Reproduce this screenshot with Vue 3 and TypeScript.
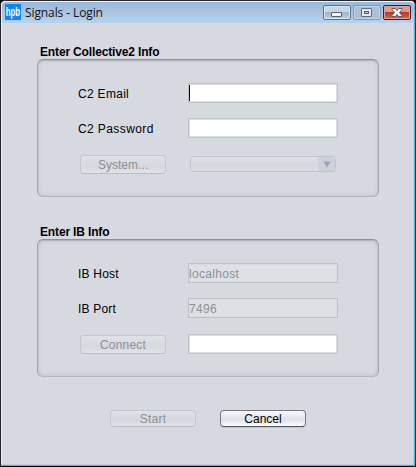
<script setup lang="ts">
import { ref } from 'vue'

const email = ref('')
const password = ref('')
const host = ref('localhost')
const port = ref('7496')
const account = ref('')
</script>

<template>
  <main class="window">
    <header class="titlebar">
      <div class="logo"><span>hpb</span></div>
      <h1>Signals - Login</h1>
      <nav class="controls">
        <button class="ctl" aria-label="Minimize">
          <svg width="26" height="13" viewBox="0 0 26 13"><rect x="7.5" y="6.5" width="10" height="4" rx=".5" fill="#f5f5f5" stroke="#565f70" /></svg>
        </button>
        <button class="ctl dim" aria-label="Maximize">
          <svg width="26" height="13" viewBox="0 0 26 13">
            <rect x="7.5" y="2.5" width="10" height="8" rx=".5" fill="#e4e8ec" stroke="#626d7d" />
            <rect x="10.5" y="5.5" width="4" height="2" fill="#9fb9d8" stroke="#59677b" />
          </svg>
        </button>
        <button class="ctl close" aria-label="Close">
          <svg width="26" height="13" viewBox="0 0 26 13">
            <path d="M8 2.500h3.500l1.500 2 1.500-2H18v1L15.500 6.500 18 9.500v1h-3.500l-1.500-2-1.500 2H8v-1l2.500-3L8 3.500z" fill="#f7f7f7" stroke="#59566a" />
          </svg>
        </button>
      </nav>
    </header>

    <form class="content" @submit.prevent>
      <section class="group">
        <h2>Enter Collective2 Info</h2>
        <div class="panel">
          <label class="l-email" for="email">C2 Email</label>
          <div class="field focused"><input id="email" v-model="email" /></div>
          <label class="l-password" for="password">C2 Password</label>
          <div class="field"><input id="password" v-model="password" type="password" /></div>
          <button class="btn" disabled><span>System...</span></button>
          <div class="combo">
            <span class="arrow"><svg width="8" height="7" viewBox="0 0 8 7"><path d="M.5.500h7L4 6.500z" fill="#9da3ae" /></svg></span>
          </div>
        </div>
      </section>

      <section class="group">
        <h2>Enter IB Info</h2>
        <div class="panel">
          <label for="host">IB Host</label>
          <div class="field off"><input id="host" v-model="host" disabled /></div>
          <label for="port">IB Port</label>
          <div class="field off"><input id="port" v-model="port" disabled /></div>
          <button class="btn" disabled><span class="wide">Connect</span></button>
          <div class="field low"><input v-model="account" aria-label="Connection status" /></div>
        </div>
      </section>

      <footer class="actions">
        <button class="btn" disabled><span class="wide">Start</span></button>
        <button class="btn active"><span>Cancel</span></button>
      </footer>
    </form>
  </main>
</template>

<style>
body { background: #000; overflow: hidden; }
</style>

<style scoped>
* { box-sizing: border-box; }
.window {
  width: 416px;
  height: 467px;
  display: flex;
  flex-direction: column;
  border: 1px solid #000;
  border-top-color: #25272c;
  border-left-color: #25272c;
  border-radius: 5px 5px 0 0;
  box-shadow: inset -1px -1px #35c2ea, inset -2px -2px #bccde6, inset 1px 1px #e6eef6;
  background: #d6d9e0;
  font: 12px/15px "Liberation Sans", Arial, sans-serif;
  color: #000;
}
.titlebar {
  height: 22px;
  margin: 0 1px 0 0;
  padding: 3px 3px 0 3px;
  display: flex;
  border-radius: 5px 5px 0 0;
  border-top: 1px solid #eef5fb;
  border-left: 1px solid #e6eef6;
  background: linear-gradient(#9bb8d8, #b9d1ea);
}
.logo {
  width: 16px;
  height: 16px;
  margin-top: -1px;
  display: flex;
  flex: none;
  align-items: center;
  justify-content: center;
  background: #0788fa;
}
.logo span {
  font: bold 13px/14px "Liberation Sans", Arial, sans-serif;
  color: #fff;
  transform: scaleX(.6);
}
h1 {
  margin: -1px 0 0 4px;
  font: 12px/17px "Open Sans", "Noto Sans", sans-serif;
  letter-spacing: -0.1px;
  color: #111;
  white-space: nowrap;
}
.controls { display: flex; gap: 2px; margin-left: auto; }
.ctl {
  width: 28px;
  height: 15px;
  padding: 0;
  border: 1px solid #5c7089;
  border-radius: 2px;
  box-shadow: inset 0 0 0 1px #dce8f4;
  background: linear-gradient(#c4d7ea 48%, #9ab5d1 50%, #b7d0e8);
}
.ctl svg { display: block; }
.dim { border-color: #8198b3; box-shadow: inset 0 0 0 1px #c1d5e9; background: #a9c2dc; }
.close { border-color: #481925; box-shadow: inset 0 0 0 1px #e3a49b; background: linear-gradient(#dc9b8d 45%, #b83b29 50%, #cf6d4c); }
.content { padding: 22px 36px 0; }
.group { margin-bottom: 28px; }
h2 { margin: 0 0 0 3px; font: bold 12px/14px "Liberation Sans", Arial, sans-serif; letter-spacing: -0.15px; }
.panel {
  width: 342px;
  height: 138px;
  padding: 24px 40px 0;
  display: grid;
  grid-template-columns: 110px 150px;
  grid-template-rows: 35px 35px 22px;
  align-items: start;
  border: 1px solid #a1a4aa;
  border-top-color: #8c8f95;
  border-bottom-color: #b3b6bb;
  border-radius: 6px;
  box-shadow: inset 0 1px 1px #b0b4ba, inset 0 0 5px #b9bdc2;
  background: #d6d9e0;
}
label { padding-top: 1px; line-height: 20px; letter-spacing: .2px; white-space: nowrap; }
.l-password { letter-spacing: .4px; }
.l-email { letter-spacing: .3px; }
.panel > label, .panel > .field { margin-top: -1px; }
.field {
  width: 150px;
  height: 20px;
  border: 1px solid #c0c1c3;
  background: #fff;
  box-shadow: inset 0 0 0 1px #dfe0e2;
}
.field input {
  display: block;
  width: 100%;
  height: 18px;
  padding: 2px 0 0;
  border: 0;
  outline: 0;
  background: transparent;
  font: 12px/16px "Liberation Sans", Arial, sans-serif;
  letter-spacing: .3px;
}
.field.off { background: #dde1e5; box-shadow: inset 0 0 0 1px #d8dbdf; }
.off input { color: #8e8f94; -webkit-text-fill-color: #8e8f94; }
.focused { display: flex; align-items: center; }
.focused::before { content: ""; width: 1px; height: 16px; background: #000; }
.panel > .low { margin-top: 0; }
.btn {
  width: 86px;
  height: 19px;
  padding: 2px 0 0;
  display: flex;
  align-items: center;
  justify-content: center;
  border: 1px solid #c3c7ce;
  border-bottom-color: #b8bcc4;
  border-radius: 4px;
  background: linear-gradient(#dfe2e6, #d5d9df 60%, #dfe2e6);
  color: #8e8f94;
  font: 12px/15px "Liberation Sans", Arial, sans-serif;
}
.wide { letter-spacing: .2px; }
.panel > .btn { margin: 1px 0 0 2px; }
.combo {
  width: 146px;
  height: 16px;
  margin: 2px 0 0 2px;
  display: flex;
  justify-content: flex-end;
  overflow: hidden;
  border: 1px solid #bec3cd;
  border-radius: 4px;
  background: linear-gradient(#e0e1e4, #d5d8df 60%, #dadde3);
}
.arrow { width: 17px; display: grid; place-items: center; border-left: 1px solid #c8ceda; background: #cbd2de; }
.actions { display: flex; gap: 24px; padding: 5px 0 0 73px; }
.actions .btn { height: 17px; }
.active { color: #000; border-color: #777a81; border-bottom-color: #50545c; box-shadow: 0 1px #c1c5cc; background: linear-gradient(#fafafb, #dfe2e7 55%, #fafbfc); }
</style>
